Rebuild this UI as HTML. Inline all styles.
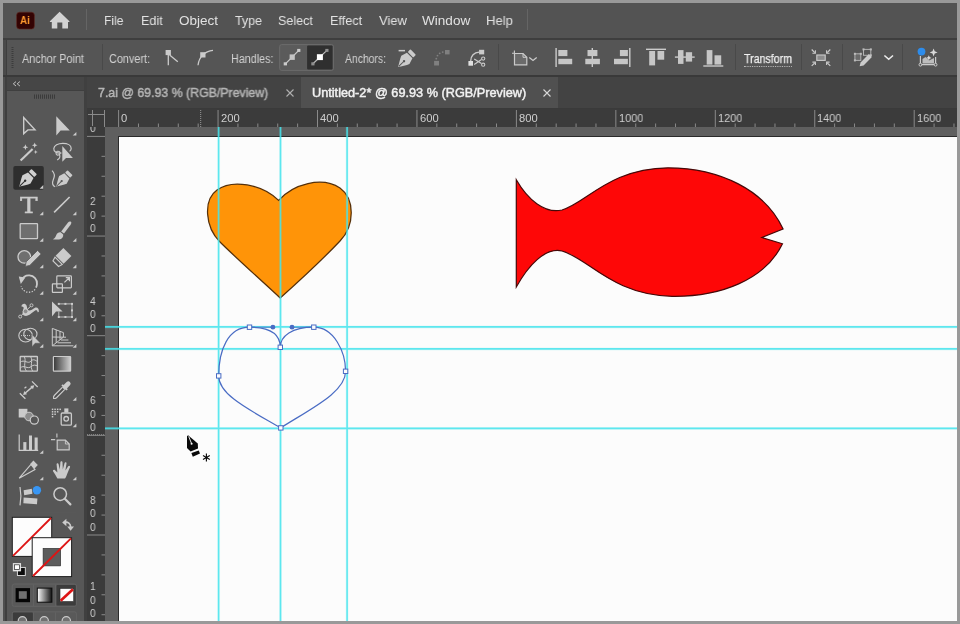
<!DOCTYPE html>
<html lang="en"><head><meta charset="utf-8"><title>Adobe Illustrator</title>
<style>
*{box-sizing:border-box}
html,body{margin:0;padding:0}
body{width:960px;height:624px;background:#999;overflow:hidden;position:relative;font-family:"Liberation Sans",sans-serif}
#app{position:absolute;left:0;top:0;width:957px;height:621px;overflow:hidden}
.b{position:absolute}
.t{position:absolute;white-space:nowrap;transform-origin:0 0;display:block;will-change:transform}
svg{position:absolute;overflow:visible}
</style></head>
<body>
<div id="app">
<div class="b" style="left:3px;top:3px;width:954px;height:618px;background:#535353;"></div>
<div class="b" style="left:3px;top:3px;width:954px;height:35px;background:#535353;"></div>
<div class="b" style="left:3px;top:38px;width:954px;height:2px;background:#3e3e3e;"></div>
<div class="b" style="left:3px;top:40px;width:3px;height:36px;background:#4a4a4a;"></div>
<div class="b" style="left:6px;top:40px;width:951px;height:35px;background:#555555;border-left:1px solid #3e3e3e;"></div>
<div class="b" style="left:3px;top:75px;width:954px;height:2px;background:#393939;"></div>
<div class="b" style="left:3px;top:77px;width:2.4000000000000004px;height:544px;background:#4f4f4f;"></div>
<div class="b" style="left:5.4px;top:77px;width:1.2999999999999998px;height:544px;background:#3f3f3f;"></div>
<div class="b" style="left:6.7px;top:77px;width:77.3px;height:13px;background:#464646;"></div>
<div class="b" style="left:6.7px;top:90px;width:77.3px;height:1px;background:#3f3f3f;"></div>
<div class="b" style="left:6.7px;top:91px;width:77.3px;height:530px;background:#575757;"></div>
<div class="b" style="left:84px;top:77px;width:3px;height:544px;background:#404040;"></div>
<div class="b" style="left:87px;top:77px;width:870px;height:31px;background:#434343;"></div>
<div class="b" style="left:301px;top:77px;width:257px;height:31px;background:#505050;"></div>
<div class="b" style="left:87px;top:108px;width:870px;height:1px;background:#3a3a3a;"></div>
<div class="b" style="left:87px;top:109px;width:870px;height:18px;background:#3b3b3b;"></div>
<div class="b" style="left:87px;top:127px;width:18px;height:494px;background:#3b3b3b;"></div>
<div class="b" style="left:105px;top:127px;width:852px;height:494px;background:#5f5f5f;"></div>
<div class="b" style="left:118px;top:136px;width:839px;height:485px;background:#fcfcfc;border-left:1px solid #2a2a2a;border-top:1px solid #2a2a2a;"></div>
<span class="t" style="left:104.30px;top:13.67px;font-size:13.5px;line-height:13.5px;color:#e2e2e2;transform:scaleX(0.8919);">File</span>
<span class="t" style="left:140.80px;top:13.67px;font-size:13.5px;line-height:13.5px;color:#e2e2e2;transform:scaleX(0.9328);">Edit</span>
<span class="t" style="left:179.30px;top:13.67px;font-size:13.5px;line-height:13.5px;color:#e2e2e2;transform:scaleX(0.9919);">Object</span>
<span class="t" style="left:235.00px;top:13.67px;font-size:13.5px;line-height:13.5px;color:#e2e2e2;transform:scaleX(0.9225);">Type</span>
<span class="t" style="left:278.30px;top:13.67px;font-size:13.5px;line-height:13.5px;color:#e2e2e2;transform:scaleX(0.9302);">Select</span>
<span class="t" style="left:329.50px;top:13.67px;font-size:13.5px;line-height:13.5px;color:#e2e2e2;transform:scaleX(0.9396);">Effect</span>
<span class="t" style="left:378.80px;top:13.67px;font-size:13.5px;line-height:13.5px;color:#e2e2e2;transform:scaleX(0.9615);">View</span>
<span class="t" style="left:421.80px;top:13.67px;font-size:13.5px;line-height:13.5px;color:#e2e2e2;transform:scaleX(1.0039);">Window</span>
<span class="t" style="left:486.30px;top:13.67px;font-size:13.5px;line-height:13.5px;color:#e2e2e2;transform:scaleX(0.9689);">Help</span>
<div class="b" style="left:86px;top:9px;width:1px;height:21px;background:#656565;"></div>
<div class="b" style="left:527px;top:9px;width:1px;height:21px;background:#656565;"></div>
<span class="t" style="left:22.00px;top:53.24px;font-size:12px;line-height:12px;color:#d2d2d2;transform:scaleX(0.9023);">Anchor Point</span>
<span class="t" style="left:109.00px;top:53.24px;font-size:12px;line-height:12px;color:#d2d2d2;transform:scaleX(0.9040);">Convert:</span>
<span class="t" style="left:230.50px;top:53.24px;font-size:12px;line-height:12px;color:#d2d2d2;transform:scaleX(0.8973);">Handles:</span>
<span class="t" style="left:345.00px;top:53.24px;font-size:12px;line-height:12px;color:#d2d2d2;transform:scaleX(0.8658);">Anchors:</span>
<span class="t" style="left:744.00px;top:53.24px;font-size:12px;line-height:12px;color:#f0f0f0;transform:scaleX(0.8851);border-bottom:1px dotted #bdbdbd;padding-bottom:1px;-webkit-text-stroke:0.25px #f0f0f0;">Transform</span>
<div class="b" style="left:102px;top:44px;width:1px;height:26px;background:#494949;"></div>
<div class="b" style="left:498px;top:44px;width:1px;height:26px;background:#494949;"></div>
<div class="b" style="left:735px;top:44px;width:1px;height:26px;background:#494949;"></div>
<div class="b" style="left:800.5px;top:44px;width:1.0px;height:26px;background:#494949;"></div>
<div class="b" style="left:841.8px;top:44px;width:1.0px;height:26px;background:#494949;"></div>
<div class="b" style="left:901.6px;top:44px;width:1.0px;height:26px;background:#494949;"></div>
<span class="t" style="left:98.30px;top:86.90px;font-size:12.4px;line-height:12.4px;color:#b6b6b6;transform:scaleX(0.9959);-webkit-text-stroke:0.45px #b6b6b6;">7.ai @ 69.93 % (RGB/Preview)</span>
<span class="t" style="left:312.30px;top:86.90px;font-size:12.4px;line-height:12.4px;color:#f2f2f2;transform:scaleX(1.0259);-webkit-text-stroke:0.45px #f2f2f2;">Untitled-2* @ 69.93 % (RGB/Preview)</span>
<svg style="left:285.5px;top:89.3px" width="8" height="8" viewBox="0 0 8 8"><path d="M0.5 0.5L7.5 7.5M7.5 0.5L0.5 7.5" stroke="#b0b0b0" stroke-width="1.1" fill="none"/></svg>
<svg style="left:543px;top:89.3px" width="8" height="8" viewBox="0 0 8 8"><path d="M0.5 0.5L7.5 7.5M7.5 0.5L0.5 7.5" stroke="#d8d8d8" stroke-width="1.1" fill="none"/></svg>
<svg style="left:0;top:0" width="957" height="621" viewBox="0 0 957 621"><path d="M92.5 110V126M88 114.5H105M104.5 110V127" stroke="#8a8a8a" stroke-width="1" fill="none"/><path d="M118.60 110V127M138.49 123.5V127M158.38 123.5V127M178.27 123.5V127M198.16 123.5V127M218.05 110V127M237.94 123.5V127M257.83 123.5V127M277.72 123.5V127M297.61 123.5V127M317.50 110V127M337.39 123.5V127M357.28 123.5V127M377.17 123.5V127M397.06 123.5V127M416.95 110V127M436.84 123.5V127M456.73 123.5V127M476.62 123.5V127M496.51 123.5V127M516.40 110V127M536.29 123.5V127M556.18 123.5V127M576.07 123.5V127M595.96 123.5V127M615.85 110V127M635.74 123.5V127M655.63 123.5V127M675.52 123.5V127M695.41 123.5V127M715.30 110V127M735.19 123.5V127M755.08 123.5V127M774.97 123.5V127M794.86 123.5V127M814.75 110V127M834.64 123.5V127M854.53 123.5V127M874.42 123.5V127M894.31 123.5V127M914.20 110V127M934.09 123.5V127M953.98 123.5V127" stroke="#8a8a8a" stroke-width="1" fill="none"/><path d="M200.7 110V127" stroke="#9a9a9a" stroke-width="1" stroke-dasharray="1 1" fill="none"/><path d="M87 434.8H105" stroke="#9a9a9a" stroke-width="1" stroke-dasharray="1 1" fill="none"/><path d="M87 136.40H105M101.5 156.33H105M101.5 176.26H105M101.5 196.19H105M101.5 216.12H105M87 236.05H105M101.5 255.98H105M101.5 275.91H105M101.5 295.84H105M101.5 315.77H105M87 335.70H105M101.5 355.63H105M101.5 375.56H105M101.5 395.49H105M101.5 415.42H105M87 435.35H105M101.5 455.28H105M101.5 475.21H105M101.5 495.14H105M101.5 515.07H105M87 535.00H105M101.5 554.93H105M101.5 574.86H105M101.5 594.79H105M101.5 614.72H105M87 634.65H105" stroke="#8a8a8a" stroke-width="1" fill="none"/></svg>
<span class="t" style="left:121.30px;top:112.92px;font-size:11.2px;line-height:11.2px;color:#cfcfcf;transform:scaleX(0.9750);">0</span>
<span class="t" style="left:220.75px;top:112.92px;font-size:11.2px;line-height:11.2px;color:#cfcfcf;transform:scaleX(0.9750);">200</span>
<span class="t" style="left:320.20px;top:112.92px;font-size:11.2px;line-height:11.2px;color:#cfcfcf;transform:scaleX(0.9750);">400</span>
<span class="t" style="left:419.65px;top:112.92px;font-size:11.2px;line-height:11.2px;color:#cfcfcf;transform:scaleX(0.9750);">600</span>
<span class="t" style="left:519.10px;top:112.92px;font-size:11.2px;line-height:11.2px;color:#cfcfcf;transform:scaleX(0.9750);">800</span>
<span class="t" style="left:618.55px;top:112.92px;font-size:11.2px;line-height:11.2px;color:#cfcfcf;transform:scaleX(0.9750);">1000</span>
<span class="t" style="left:718.00px;top:112.92px;font-size:11.2px;line-height:11.2px;color:#cfcfcf;transform:scaleX(0.9750);">1200</span>
<span class="t" style="left:817.45px;top:112.92px;font-size:11.2px;line-height:11.2px;color:#cfcfcf;transform:scaleX(0.9750);">1400</span>
<span class="t" style="left:916.90px;top:112.92px;font-size:11.2px;line-height:11.2px;color:#cfcfcf;transform:scaleX(0.9750);">1600</span>
<div class="b" style="left:87px;top:127px;width:18px;height:494px;overflow:hidden">
<span class="t" style="left:2.80px;top:-3.71px;font-size:11px;line-height:11px;color:#cfcfcf;transform:scaleX(0.9153);">0</span>
<span class="t" style="left:2.80px;top:69.14px;font-size:11px;line-height:11px;color:#cfcfcf;transform:scaleX(0.9153);">2</span>
<span class="t" style="left:2.80px;top:82.54px;font-size:11px;line-height:11px;color:#cfcfcf;transform:scaleX(0.9153);">0</span>
<span class="t" style="left:2.80px;top:95.94px;font-size:11px;line-height:11px;color:#cfcfcf;transform:scaleX(0.9153);">0</span>
<span class="t" style="left:2.80px;top:168.79px;font-size:11px;line-height:11px;color:#cfcfcf;transform:scaleX(0.9153);">4</span>
<span class="t" style="left:2.80px;top:182.19px;font-size:11px;line-height:11px;color:#cfcfcf;transform:scaleX(0.9153);">0</span>
<span class="t" style="left:2.80px;top:195.59px;font-size:11px;line-height:11px;color:#cfcfcf;transform:scaleX(0.9153);">0</span>
<span class="t" style="left:2.80px;top:268.44px;font-size:11px;line-height:11px;color:#cfcfcf;transform:scaleX(0.9153);">6</span>
<span class="t" style="left:2.80px;top:281.84px;font-size:11px;line-height:11px;color:#cfcfcf;transform:scaleX(0.9153);">0</span>
<span class="t" style="left:2.80px;top:295.24px;font-size:11px;line-height:11px;color:#cfcfcf;transform:scaleX(0.9153);">0</span>
<span class="t" style="left:2.80px;top:368.09px;font-size:11px;line-height:11px;color:#cfcfcf;transform:scaleX(0.9153);">8</span>
<span class="t" style="left:2.80px;top:381.49px;font-size:11px;line-height:11px;color:#cfcfcf;transform:scaleX(0.9153);">0</span>
<span class="t" style="left:2.80px;top:394.89px;font-size:11px;line-height:11px;color:#cfcfcf;transform:scaleX(0.9153);">0</span>
<span class="t" style="left:2.80px;top:454.34px;font-size:11px;line-height:11px;color:#cfcfcf;transform:scaleX(0.9153);">1</span>
<span class="t" style="left:2.80px;top:467.74px;font-size:11px;line-height:11px;color:#cfcfcf;transform:scaleX(0.9153);">0</span>
<span class="t" style="left:2.80px;top:481.14px;font-size:11px;line-height:11px;color:#cfcfcf;transform:scaleX(0.9153);">0</span>
<span class="t" style="left:2.80px;top:494.54px;font-size:11px;line-height:11px;color:#cfcfcf;transform:scaleX(0.9153);">0</span>
</div>
<svg style="left:0;top:0" width="957" height="621" viewBox="0 0 957 621"><path d="M280.2 298 C262 281 236 258 220 242 C205 227 203 200 217 190 C232 179 262 184 278.6 200.4 C293 184 322 176 340 188 C355 199 355 225 340 241 C322 260 297 283 280.2 298Z" fill="#ff9408" stroke="#55300a" stroke-width="1.25"/><path d="M516.3 179.7 C528 200 545 214 562 210 C585 204 610 168 668 167.8 C720 168 765 190 783.1 229 L761.9 237.5 L782.5 243.8 C765 280 720 297 672 296.3 C612 295 588 258 562 251 C545 247 528 266 516.3 287Z" fill="#fe0707" stroke="#450808" stroke-width="1.2"/><path d="M218.6 127V621M280.5 127V621M347.1 127V621M105 326.9H957M105 348.9H957M105 428.4H957" stroke="#45e4ec" stroke-width="3" fill="none" opacity="0.14"/><path d="M218.6 127V621M280.5 127V621M347.1 127V621M105 326.9H957M105 348.9H957M105 428.4H957" stroke="#45e4ec" stroke-width="1.6" fill="none" opacity="0.85"/><path d="M280.6 427.9 C250 410 218.7 395 218.7 375.9 C218.7 350 228 327.2 249.5 327.2 C272.9 327.2 280.3 336 280.3 347.3 C280.3 336 292 327.2 313.8 327.2 C334 327.2 345.6 352 345.6 371.3 C345.6 392 312 408 280.6 427.9Z" fill="none" stroke="#4a6cc4" stroke-width="1.2"/><path d="M249.5 327.2H272.9M292 327.2H313.8" stroke="#4a6cc4" stroke-width="0.9" fill="none"/><rect x="216.5" y="373.7" width="4.4" height="4.4" fill="#fcfcfc" stroke="#4a6cc4" stroke-width="1"/><rect x="247.3" y="325.0" width="4.4" height="4.4" fill="#fcfcfc" stroke="#4a6cc4" stroke-width="1"/><rect x="311.6" y="325.0" width="4.4" height="4.4" fill="#fcfcfc" stroke="#4a6cc4" stroke-width="1"/><rect x="343.40000000000003" y="369.1" width="4.4" height="4.4" fill="#fcfcfc" stroke="#4a6cc4" stroke-width="1"/><rect x="278.1" y="345.1" width="4.4" height="4.4" fill="#fcfcfc" stroke="#4a6cc4" stroke-width="1"/><rect x="278.6" y="425.7" width="4.4" height="4.4" fill="#fcfcfc" stroke="#4a6cc4" stroke-width="1"/><circle cx="272.9" cy="327.2" r="2.4" fill="#4a6cc4"/><circle cx="292" cy="327.2" r="2.4" fill="#4a6cc4"/><path d="M188.1 435.3 L197.8 443.6 L198 448.6 L190.6 451.5 L187 448 L187 436.2Z" fill="#0a0a0a"/><path d="M188.7 436.4L191.4 443.2" stroke="#fcfcfc" stroke-width="0.9"/><circle cx="191.6" cy="443.8" r="1.05" fill="#fcfcfc"/><path d="M191.4 453.1 L198.7 450.6 L200 453.6 L192.8 456.7Z" fill="#0a0a0a"/><path d="M206.4 453.6V461.4M203 455.6L209.8 459.5M209.8 455.6L203 459.5" stroke="#0a0a0a" stroke-width="1.15" fill="none"/></svg>
<svg style="left:0;top:0" width="957" height="621" viewBox="0 0 957 621"><rect x="16.6" y="12.2" width="17.8" height="16.8" rx="3" fill="#330303" stroke="#5f2a22" stroke-width="0.6"/><path d="M59.6 11.7 L69.4 21.2 Q69.8 22 68.9 22.1 H68 V28.6 H62.3 V22.6 H57.3 V28.6 H51.8 V22.1 H50.4 Q49.5 22 49.9 21.2Z" fill="#d2d2d2" /><path d="M12.5 47V69" stroke="#3c3c3c" stroke-width="2" stroke-dasharray="1 1" fill="none"/><rect x="165.60" y="50.00" width="5.30" height="5.10" rx="0" fill="#cbcbcb" /><path d="M168.3 55V65.3M169.6 55L177.8 61.8" fill="none" stroke="#cbcbcb" stroke-width="1.3" /><rect x="200.20" y="52.20" width="5.30" height="5.30" rx="0" fill="#cbcbcb" /><path d="M198 65.3 C198.4 61.5 199.8 58 202.8 54.9 C205.5 52.3 209 50.8 213 50.4" fill="none" stroke="#cbcbcb" stroke-width="1.3" /><rect x="279.70" y="44.60" width="53.70" height="25.80" rx="2" fill="#5b5b5b" stroke="#6c6c6c" stroke-width="1" /><rect x="307.10" y="45.60" width="25.50" height="23.90" rx="1" fill="#2f2f2f" /><path d="M285.4 63.8L298.8 50.4" fill="none" stroke="#cbcbcb" stroke-width="1.2" /><rect x="297.20" y="48.90" width="3.20" height="3.00" rx="0" fill="#cbcbcb" /><rect x="283.70" y="62.30" width="3.30" height="3.10" rx="0" fill="#cbcbcb" /><rect x="289.60" y="54.40" width="5.20" height="5.50" rx="0" fill="#c4c4c4" /><path d="M312.9 63.8L326.9 50.4" fill="none" stroke="#bdbdbd" stroke-width="1.2" /><rect x="325.30" y="48.90" width="3.20" height="3.00" rx="0" fill="#8f8f8f" /><rect x="311.30" y="62.30" width="3.20" height="3.10" rx="0" fill="#8f8f8f" /><rect x="316.90" y="54.20" width="6.00" height="5.90" rx="0" fill="#ffffff" /><rect x="398.60" y="49.90" width="6.40" height="1.50" rx="0" fill="#cbcbcb" /><g transform="translate(398.3,66.9) rotate(45) scale(1.03)"><path d="M0 0.3 C-1.6 -2.6 -4.6 -7 -5.6 -9.7 L-3.8 -15.6 H3.8 L5.6 -9.7 C4.6 -7 1.6 -2.6 0 0.3Z" fill="#cbcbcb"/><path d="M0 -0.6V-7.4" stroke="#545454" stroke-width="1"/><circle cx="0" cy="-7.9" r="1.15" fill="#545454"/><rect x="-3.8" y="-20.4" width="7.6" height="3.7" rx="0.8" fill="#cbcbcb"/></g><rect x="445.00" y="50.00" width="4.60" height="4.40" rx="0" fill="#808080" /><rect x="434.10" y="60.90" width="4.90" height="4.60" rx="0" fill="#808080" /><circle cx="436.3" cy="58.7" r="0.9" fill="#808080" /><circle cx="437.5" cy="55.6" r="0.9" fill="#808080" /><circle cx="439.7" cy="53.3" r="0.9" fill="#808080" /><circle cx="442.7" cy="52.1" r="0.9" fill="#808080" /><path d="M470.7 61 C470.7 56 474 52.2 479.2 52.1" fill="none" stroke="#cbcbcb" stroke-width="1.3" /><rect x="479.10" y="49.80" width="5.10" height="4.60" rx="0" fill="#cbcbcb" /><rect x="468.40" y="61.00" width="4.60" height="4.70" rx="0" fill="#e0e0e0" /><path d="M474.2 59L481.5 63.6M474.2 64.6L481.5 59.6" fill="none" stroke="#cbcbcb" stroke-width="1.2" /><circle cx="483.2" cy="58.6" r="1.6" fill="none" stroke="#cbcbcb" stroke-width="1.1" /><circle cx="483.2" cy="64.7" r="1.6" fill="none" stroke="#cbcbcb" stroke-width="1.1" /><path d="M514.5 53.5H523L526.8 57.3V64.8H514.5Z" fill="#6b6b6b" stroke="#cbcbcb" stroke-width="1.2" /><path d="M523 53.5V57.3H526.8" fill="none" stroke="#cbcbcb" stroke-width="1" /><path d="M512 53.2H514.5M514.4 50.6V53.4" fill="none" stroke="#cbcbcb" stroke-width="1.1" /><path d="M529.3 57.4L533 60.4L536.7 57.4" fill="none" stroke="#cbcbcb" stroke-width="1.3" /><path d="M556.1 48.1V67.1" fill="none" stroke="#cbcbcb" stroke-width="1.4" /><rect x="558.30" y="50.00" width="9.10" height="6.10" rx="0" fill="#c6c6c6" /><rect x="558.30" y="58.80" width="13.90" height="5.40" rx="0" fill="#c6c6c6" /><path d="M592.3 48.1V67.1" fill="none" stroke="#cbcbcb" stroke-width="1.4" /><rect x="587.50" y="50.00" width="9.90" height="6.10" rx="0" fill="#c6c6c6" /><rect x="585.30" y="58.80" width="14.60" height="5.40" rx="0" fill="#c6c6c6" /><path d="M629.8 48.1V67.1" fill="none" stroke="#cbcbcb" stroke-width="1.4" /><rect x="619.90" y="50.00" width="8.00" height="6.10" rx="0" fill="#c6c6c6" /><rect x="614.00" y="58.80" width="13.90" height="5.40" rx="0" fill="#c6c6c6" /><path d="M646 49.3H666" fill="none" stroke="#cbcbcb" stroke-width="1.4" /><rect x="649.20" y="51.00" width="5.90" height="14.40" rx="0" fill="#c6c6c6" /><rect x="657.50" y="51.00" width="6.70" height="8.70" rx="0" fill="#c6c6c6" /><path d="M674.9 57.1H694.7" fill="none" stroke="#cbcbcb" stroke-width="1.4" /><rect x="678.00" y="50.10" width="5.50" height="13.80" rx="0" fill="#c6c6c6" /><rect x="685.80" y="52.20" width="6.30" height="9.40" rx="0" fill="#c6c6c6" /><path d="M703.3 66H723.3" fill="none" stroke="#cbcbcb" stroke-width="1.4" /><rect x="706.70" y="50.10" width="5.70" height="14.50" rx="0" fill="#c6c6c6" /><rect x="714.50" y="55.30" width="6.70" height="9.30" rx="0" fill="#c6c6c6" /><rect x="816.80" y="55.00" width="8.40" height="5.40" rx="0" fill="#8c8c8c" stroke="#cbcbcb" stroke-width="1.1" /><path d="M811.7 49.5L814.8 52.6M830.3 49.5L827.2 52.6M811.7 65.9L814.8 62.8M830.3 65.9L827.2 62.8" fill="none" stroke="#cbcbcb" stroke-width="1.2" /><path d="M812.4 53.3H815.4V50.3M829.6 53.3H826.6V50.3M812.4 62.1H815.4V65.1M829.6 62.1H826.6V65.1" fill="none" stroke="#cbcbcb" stroke-width="1.1" /><rect x="854.90" y="53.80" width="5.90" height="6.60" rx="0" fill="#6a6a6a" stroke="#b2b2b2" stroke-width="1" /><rect x="863.50" y="49.40" width="7.30" height="5.90" rx="0" fill="none" stroke="#b2b2b2" stroke-width="1" /><rect x="853.90" y="52.80" width="2.00" height="2.00" rx="0" fill="#bcbcbc" /><rect x="859.80" y="52.80" width="2.00" height="2.00" rx="0" fill="#bcbcbc" /><rect x="853.90" y="59.40" width="2.00" height="2.00" rx="0" fill="#bcbcbc" /><rect x="862.50" y="48.40" width="2.00" height="2.00" rx="0" fill="#bcbcbc" /><rect x="869.80" y="48.40" width="2.00" height="2.00" rx="0" fill="#bcbcbc" /><rect x="869.80" y="54.30" width="2.00" height="2.00" rx="0" fill="#bcbcbc" /><path d="M859.6 66.2L860.6 62.4L868.9 54.1L871.9 57.1L863.6 65.4Z" fill="#cbcbcb" /><path d="M884.4 55.5L888.7 59.3L893 55.5" fill="none" stroke="#ececec" stroke-width="1.6" /><path d="M920.4 56V64.7H935.6V57" fill="none" stroke="#cbcbcb" stroke-width="1.2" /><path d="M922.5 63.5V59L925.5 57L929 60.5L934 58V63.5Z" fill="#bdbdbd" /><circle cx="920.4" cy="64.7" r="1.4" fill="#545454" stroke="#cbcbcb" stroke-width="1" /><circle cx="935.6" cy="64.7" r="1.4" fill="#545454" stroke="#cbcbcb" stroke-width="1" /><path d="M933.6 48.4L934.7 51.3L937.6 52.4L934.7 53.5L933.6 56.4L932.5 53.5L929.6 52.4L932.5 51.3Z" fill="#dadada" /><path d="M928.8 55.2L929.6 57.1L931.5 57.9L929.6 58.7L928.8 60.6L928 58.7L926.1 57.9L928 57.1Z" fill="#dadada" /><circle cx="921.5" cy="51.6" r="3.9" fill="#2d8ceb" /><path d="M16 81.6L13.3 83.8L16 86M19.9 81.6L17.2 83.8L19.9 86" fill="none" stroke="#c2c2c2" stroke-width="1" /><path d="M34 96.6H55.3" stroke="#3b3b3b" stroke-width="4.2" stroke-dasharray="1 1" fill="none"/><path d="M23.7 117.6V133.6L27.9 129.9H35Z" fill="none" stroke="#cbcbcb" stroke-width="1.4" stroke-linejoin="miter"/><path d="M56.3 116.3V135.4L60.6 130.6H69.8Z" fill="#cbcbcb" /><path d="M20.6 160.5L32.6 148.9" fill="none" stroke="#cbcbcb" stroke-width="2.1" /><path d="M25.4 144.29999999999998L26.212 146.38799999999998L28.299999999999997 147.2L26.212 148.012L25.4 150.1L24.587999999999997 148.012L22.5 147.2L24.587999999999997 146.38799999999998Z" fill="#cbcbcb" /><path d="M34.7 142.5L35.484 144.51600000000002L37.5 145.3L35.484 146.084L34.7 148.10000000000002L33.916000000000004 146.084L31.900000000000002 145.3L33.916000000000004 144.51600000000002Z" fill="#cbcbcb" /><path d="M35.7 149.9L36.288000000000004 151.412L37.800000000000004 152L36.288000000000004 152.588L35.7 154.1L35.112 152.588L33.6 152L35.112 151.412Z" fill="#cbcbcb" /><path d="M61.5 153 C56 153.5 53.6 151 53.8 148.6 C54 145.5 58 143.4 62.8 143.4 C67.6 143.4 71.2 145.4 71.2 148.4 C71.2 149.6 70.6 150.6 69.6 151.4" fill="none" stroke="#cbcbcb" stroke-width="1.2" /><path d="M57.6 151.2 C59.5 151 60.5 152.4 60 153.8 C59.5 155.2 57.4 155.6 56.4 154.4 C55.6 153.2 56.4 151.6 57.6 151.2M59.6 154.6 C60.3 156.6 59.6 158.6 57.2 160" fill="none" stroke="#cbcbcb" stroke-width="1.1" /><path d="M62.3 146V161.8L66 158H72.9Z" fill="#cbcbcb" /><rect x="13.30" y="166.00" width="30.50" height="23.80" rx="2" fill="#2e2e2e" /><g transform="translate(19.5,186.4) rotate(45) scale(1.02)"><path d="M0 0.3 C-1.6 -2.6 -4.6 -7 -5.6 -9.7 L-3.8 -15.6 H3.8 L5.6 -9.7 C4.6 -7 1.6 -2.6 0 0.3Z" fill="#d0d0d0"/><path d="M0 -0.6V-7.4" stroke="#2e2e2e" stroke-width="1"/><circle cx="0" cy="-7.9" r="1.15" fill="#2e2e2e"/><rect x="-3.8" y="-20.4" width="7.6" height="3.7" rx="0.8" fill="#d0d0d0"/></g><g transform="translate(56.4,186.4) rotate(45) scale(0.95)"><path d="M0 0.3 C-1.6 -2.6 -4.6 -7 -5.6 -9.7 L-3.8 -15.6 H3.8 L5.6 -9.7 C4.6 -7 1.6 -2.6 0 0.3Z" fill="#cbcbcb"/><path d="M0 -0.6V-7.4" stroke="#575757" stroke-width="1"/><circle cx="0" cy="-7.9" r="1.15" fill="#575757"/><rect x="-3.8" y="-20.4" width="7.6" height="3.7" rx="0.8" fill="#cbcbcb"/></g><path d="M52 170.6 C55.4 173.5 54.6 177 53.2 180 C52 182.8 52.3 185.6 55.2 186.8" fill="none" stroke="#cbcbcb" stroke-width="1.2" /><path d="M54.1 212.4L69.6 197" fill="none" stroke="#cbcbcb" stroke-width="1.6" /><rect x="20.20" y="223.60" width="17.30" height="15.00" rx="0.6" fill="#6f6f6f" stroke="#cbcbcb" stroke-width="1.3" /><path d="M70.9 221.8 C71.6 222.4 71.4 223.6 70.6 224.8 L64 233.6 L61.2 231.4 L67.8 222.8 C68.8 221.6 70 221.2 70.9 221.8Z" fill="#cbcbcb" /><path d="M60.6 232.2L63.2 234.4 C63.6 237 62 239 59 239.4 C56.5 239.7 54.3 239.5 52.8 239.3 C55 238.4 55.6 236.6 56.3 234.9 C57.1 233 58.7 232 60.6 232.2Z" fill="#cbcbcb" /><circle cx="24.3" cy="256.9" r="6.3" fill="#6f6f6f" stroke="#cbcbcb" stroke-width="1.3" /><path d="M25.2 266.4L26.2 261.8L37.6 250.4L41.2 254L29.8 265.4Z" fill="#cbcbcb" stroke="#575757" stroke-width="0.8" /><path d="M63.4 248L71.4 256L63.6 263.8L55.6 255.8Z" fill="#cbcbcb" /><path d="M55 257.2L62.2 264.4L58.6 266.4L53 260.8Z" fill="none" stroke="#cbcbcb" stroke-width="1.2" /><path d="M21.6 280.6 C23 276.8 26 275.2 29.4 275.4 C34 275.7 37.3 279.4 37 284 C36.9 285.4 36.5 286.6 36 287.6" fill="none" stroke="#cbcbcb" stroke-width="1.8" /><path d="M18.8 276.6L25.4 277.6L20.8 284Z" fill="#cbcbcb" /><path d="M35 289.4 C32.6 292.6 27.4 293.2 24 290.6 C22.6 289.5 21.6 288 21.2 286.4" fill="none" stroke="#cbcbcb" stroke-width="1.3" stroke-dasharray="1.3 1.5"/><rect x="56.80" y="275.90" width="14.60" height="12.00" rx="0.8" fill="none" stroke="#cbcbcb" stroke-width="1.2" /><rect x="52.40" y="283.80" width="10.00" height="8.60" rx="0.5" fill="none" stroke="#cbcbcb" stroke-width="1.2" /><path d="M64.4 282.4L69 278M65.8 277.6H69.4V281.2" fill="none" stroke="#cbcbcb" stroke-width="1.2" /><path d="M21.4 306.6 C21.6 304.4 23.6 303.2 25.4 304.2 C27.6 305.6 26.6 308.4 28 310 C29.6 311.8 32.4 309.2 34.6 308 C37 306.8 39.4 308.4 38.8 312 L37.6 312.2 C37.4 310.4 36.4 309.8 34.8 310.8 C32 312.6 28.6 316.6 24.6 315.8 C21.4 315 22.8 311 23.6 308.6 C24 307.2 22.8 306.4 21.4 306.6Z" fill="#cbcbcb" /><path d="M20.4 316.4L31.4 305.4" fill="none" stroke="#cbcbcb" stroke-width="1" /><circle cx="20.2" cy="316.6" r="1.5" fill="#575757" stroke="#cbcbcb" stroke-width="0.9" /><circle cx="31.5" cy="305.3" r="1.5" fill="#575757" stroke="#cbcbcb" stroke-width="0.9" /><circle cx="25.6" cy="311.3" r="2.4" fill="#8a8a8a" stroke="#cbcbcb" stroke-width="0.9" /><path d="M52 301.4V316.4L56 311.4H62.6Z" fill="#cbcbcb" /><path d="M58.8 303.9H72V317H58.8V311.6" fill="none" stroke="#cbcbcb" stroke-width="0.9" /><rect x="57.80" y="302.90" width="2.00" height="2.00" rx="0" fill="#cbcbcb" /><rect x="64.40" y="302.90" width="2.00" height="2.00" rx="0" fill="#cbcbcb" /><rect x="71.00" y="302.90" width="2.00" height="2.00" rx="0" fill="#cbcbcb" /><rect x="71.00" y="309.40" width="2.00" height="2.00" rx="0" fill="#cbcbcb" /><rect x="71.00" y="316.00" width="2.00" height="2.00" rx="0" fill="#cbcbcb" /><rect x="64.40" y="316.00" width="2.00" height="2.00" rx="0" fill="#cbcbcb" /><rect x="57.80" y="316.00" width="2.00" height="2.00" rx="0" fill="#cbcbcb" /><ellipse cx="25.6" cy="335.6" rx="6.8" ry="6.4" fill="none" stroke="#cbcbcb" stroke-width="1.1"/><ellipse cx="30.4" cy="334" rx="6.6" ry="5.8" fill="none" stroke="#cbcbcb" stroke-width="1.1"/><path d="M21 335.6H31.5" fill="none" stroke="#cbcbcb" stroke-width="1" stroke-dasharray="1 1"/><path d="M32 334.4V346.8L35.2 343.2H40.6Z" fill="#cbcbcb" stroke="#575757" stroke-width="0.5" /><path d="M52.3 328.4V345.8H73.4M52.3 328.4L63.4 332.6V337.2M52.3 337L63.4 337.2M52.3 345.8L63.4 337.2M56.2 329.9V342.8M60 331.3V339.8M63.4 337.2H66M61 340H68.4M57.6 342.8H71" fill="none" stroke="#cbcbcb" stroke-width="1" /><rect x="20.20" y="356.50" width="17.20" height="14.60" rx="0.6" fill="#5e5e5e" stroke="#cbcbcb" stroke-width="1.3" /><path d="M20.2 362.4 C24 358.6 28 364.8 31 361 C33 358.8 35.4 360 37.4 361.6M20.2 368.2 C23.6 364 27.6 370 31.4 366.4 C33.4 364.6 35.6 365 37.4 366M24 356.5 C27 360 22.4 366 26.4 371.1M30.6 356.5 C33.4 361 29.4 366 32.6 371.1" fill="none" stroke="#cbcbcb" stroke-width="1" /><defs><linearGradient id="gA" x1="0" x2="1" y1="0" y2="0"><stop offset="0" stop-color="#383838"/><stop offset="1" stop-color="#cfcfcf"/></linearGradient><linearGradient id="gB" x1="0" x2="1" y1="0" y2="0"><stop offset="0" stop-color="#ffffff"/><stop offset="1" stop-color="#101010"/></linearGradient></defs><rect x="53.40" y="356.50" width="17.20" height="14.60" rx="0.6" fill="url(#gA)" stroke="#cbcbcb" stroke-width="1.2" /><path d="M19.8 393.2L25.4 398.8M32 381.4L37.7 387" fill="none" stroke="#cbcbcb" stroke-width="1.3" /><path d="M25 393.2L32.4 386.9" fill="none" stroke="#cbcbcb" stroke-width="1.5" /><path d="M23.1 394.9L27 394.2L24.3 391Z" fill="#cbcbcb" /><path d="M34.3 385.3L33 389.2L30.3 386Z" fill="#cbcbcb" /><path d="M24.5 388.3L26.4 386.7" fill="none" stroke="#cbcbcb" stroke-width="1.2" /><path d="M62.6 387.2L54.3 395.5 C53.6 396.3 53.4 397.6 53.6 398.4 C54.4 398.6 55.7 398.4 56.5 397.7L64.8 389.4" fill="#4c4c4c" stroke="#cbcbcb" stroke-width="1.2" /><path d="M62.1 384.9L67.1 389.9" fill="none" stroke="#cbcbcb" stroke-width="2" /><path d="M65 387L68.3 383.7" fill="none" stroke="#cbcbcb" stroke-width="4.6" stroke-linecap="round"/><rect x="18.70" y="408.80" width="8.70" height="8.70" rx="0" fill="#cbcbcb" /><circle cx="29" cy="416.5" r="4.3" fill="#8c8c8c" stroke="#cbcbcb" stroke-width="1" /><circle cx="34.3" cy="420.1" r="4.1" fill="#555" stroke="#cbcbcb" stroke-width="1.2" /><rect x="61.20" y="413.00" width="10.20" height="12.10" rx="1.2" fill="none" stroke="#cbcbcb" stroke-width="1.3" /><rect x="64.30" y="408.40" width="4.10" height="4.20" rx="0" fill="#cbcbcb" /><circle cx="66.2" cy="418.8" r="2.3" fill="none" stroke="#cbcbcb" stroke-width="1.3" /><rect x="51.80" y="408.60" width="1.50" height="1.50" rx="0" fill="#cbcbcb" /><rect x="54.35" y="408.60" width="1.50" height="1.50" rx="0" fill="#cbcbcb" /><rect x="56.90" y="408.60" width="1.50" height="1.50" rx="0" fill="#cbcbcb" /><rect x="59.45" y="408.60" width="1.50" height="1.50" rx="0" fill="#cbcbcb" /><rect x="51.80" y="411.05" width="1.50" height="1.50" rx="0" fill="#cbcbcb" /><rect x="54.35" y="411.05" width="1.50" height="1.50" rx="0" fill="#cbcbcb" /><rect x="56.90" y="411.05" width="1.50" height="1.50" rx="0" fill="#cbcbcb" /><rect x="51.80" y="413.50" width="1.50" height="1.50" rx="0" fill="#cbcbcb" /><rect x="54.35" y="413.50" width="1.50" height="1.50" rx="0" fill="#cbcbcb" /><rect x="51.80" y="415.95" width="1.50" height="1.50" rx="0" fill="#cbcbcb" /><path d="M19.2 434.4V450.3H38.2" fill="none" stroke="#cbcbcb" stroke-width="1.2" /><rect x="23.30" y="442.10" width="3.10" height="8.20" rx="0" fill="#cbcbcb" /><rect x="29.00" y="435.50" width="3.00" height="14.80" rx="0" fill="#cbcbcb" /><rect x="34.60" y="437.50" width="3.10" height="12.80" rx="0" fill="#cbcbcb" /><path d="M56.9 433.4V437.6M51 439.6H55.2" fill="none" stroke="#cbcbcb" stroke-width="1.1" /><path d="M57.2 440.2H65.4L69.2 444V449.8H57.2Z" fill="#6f6f6f" stroke="#cbcbcb" stroke-width="1.2" /><path d="M65.4 440.2V444H69.2" fill="none" stroke="#cbcbcb" stroke-width="0.9" /><path d="M19.2 478.2L31 464.4L35 469.6Z" fill="none" stroke="#cbcbcb" stroke-width="1.1" /><path d="M30.2 463.9L33.4 460.6L37.8 465L34.6 468.4Z" fill="#cbcbcb" /><path d="M57.4 478.4 C56 476 54.6 473.6 53.2 471.6 C52.4 470.4 53.6 469.2 54.8 470 L57.4 472.4 L56.6 464.4 C56.5 463 58.3 462.8 58.6 464.2 L59.8 469.6 L60.4 462.2 C60.5 460.8 62.4 460.8 62.5 462.2 L62.8 469.4 L64.6 463 C65 461.6 66.8 462.1 66.5 463.5 L65.4 470.4 L68.2 466.2 C69 465 70.6 466 70 467.2 C68.6 470.2 67.4 473.2 66.6 475.4 C66.2 476.6 65.6 477.6 65 478.6Z" fill="#cbcbcb" /><path d="M20 487 C21.2 493 21.2 499.4 20 505.4" fill="none" stroke="#cbcbcb" stroke-width="1.2" /><path d="M23.6 490.2L31.8 488.8L32.4 493.8L24.2 495.2Z" fill="#cbcbcb" /><path d="M23.6 497.6L37.4 498.6L37 504.2L23.4 503.2Z" fill="#cbcbcb" /><circle cx="36.9" cy="490.2" r="4.2" fill="#3896f4" /><circle cx="60.2" cy="494.1" r="6.3" fill="none" stroke="#cbcbcb" stroke-width="1.5" /><path d="M64.8 498.8L70.4 504.4" fill="none" stroke="#cbcbcb" stroke-width="2.2" stroke-linecap="round"/><path d="M76.4 135.6H72.7L76.4 131.9Z" fill="#cbcbcb" /><path d="M43.3 188.64H39.599999999999994L43.3 184.94Z" fill="#cbcbcb" /><path d="M43.3 215.16H39.599999999999994L43.3 211.46Z" fill="#cbcbcb" /><path d="M76.4 215.16H72.7L76.4 211.46Z" fill="#cbcbcb" /><path d="M43.3 241.68H39.599999999999994L43.3 237.98000000000002Z" fill="#cbcbcb" /><path d="M76.4 241.68H72.7L76.4 237.98000000000002Z" fill="#cbcbcb" /><path d="M43.3 268.2H39.599999999999994L43.3 264.5Z" fill="#cbcbcb" /><path d="M76.4 268.2H72.7L76.4 264.5Z" fill="#cbcbcb" /><path d="M43.3 294.72H39.599999999999994L43.3 291.02000000000004Z" fill="#cbcbcb" /><path d="M76.4 294.72H72.7L76.4 291.02000000000004Z" fill="#cbcbcb" /><path d="M43.3 321.24H39.599999999999994L43.3 317.54Z" fill="#cbcbcb" /><path d="M76.4 321.24H72.7L76.4 317.54Z" fill="#cbcbcb" /><path d="M43.3 347.76H39.599999999999994L43.3 344.06Z" fill="#cbcbcb" /><path d="M76.4 347.76H72.7L76.4 344.06Z" fill="#cbcbcb" /><path d="M76.4 400.8H72.7L76.4 397.1Z" fill="#cbcbcb" /><path d="M76.4 427.32H72.7L76.4 423.62Z" fill="#cbcbcb" /><path d="M43.3 453.84H39.599999999999994L43.3 450.14Z" fill="#cbcbcb" /><path d="M43.3 480.36H39.599999999999994L43.3 476.66Z" fill="#cbcbcb" /><path d="M76.4 480.36H72.7L76.4 476.66Z" fill="#cbcbcb" /><path d="M12 512.5H76" fill="none" stroke="#585858" stroke-width="1" /><rect x="12.30" y="517.30" width="39.40" height="39.10" rx="0" fill="#fdfdfd" stroke="#1e1e1e" stroke-width="1" /><path d="M13 555.8L51 518" fill="none" stroke="#dd1414" stroke-width="1.8" /><rect x="32.20" y="537.70" width="39.40" height="38.90" rx="0" fill="#fdfdfd" stroke="#1e1e1e" stroke-width="1" /><rect x="43.10" y="548.30" width="17.60" height="17.60" rx="0" fill="#5c5c5c" stroke="#2a2a2a" stroke-width="0.6" /><path d="M33 576L71 538.4" fill="none" stroke="#dd1414" stroke-width="1.9" /><path d="M64.4 522.4 C68 521.6 70.6 523.6 70.6 527" fill="none" stroke="#cbcbcb" stroke-width="1.7" /><path d="M62.2 522.6L66.4 518.8V526.2Z" fill="#cbcbcb" /><path d="M67.2 526.6H74L70.6 530.8Z" fill="#cbcbcb" /><rect x="17.40" y="567.40" width="7.90" height="8.10" rx="0" fill="#0c0c0c" stroke="#e6e6e6" stroke-width="0.9" /><rect x="13.30" y="563.60" width="7.30" height="7.30" rx="0" fill="#f6f6f6" stroke="#e6e6e6" stroke-width="0.9" /><rect x="14.60" y="564.80" width="4.80" height="4.80" rx="0" fill="#ffffff" stroke="#222" stroke-width="0.7" /><rect x="12.20" y="584.00" width="64.20" height="22.30" rx="2" fill="#595959" stroke="#646464" stroke-width="1" /><path d="M33.4 584.5V606M55.6 584.5V606" fill="none" stroke="#646464" stroke-width="1" /><rect x="56.50" y="584.90" width="19.30" height="20.50" rx="1" fill="#3c3c3c" /><rect x="15.60" y="588.10" width="14.40" height="14.10" rx="0" fill="#050505" /><rect x="18.80" y="591.20" width="8.00" height="7.60" rx="0" fill="#707070" /><rect x="37.30" y="588.10" width="14.60" height="14.10" rx="0" fill="url(#gB)" stroke="#0a0a0a" stroke-width="1" /><rect x="60.00" y="588.50" width="13.70" height="13.00" rx="0" fill="#fdfdfd" stroke="#2a2a2a" stroke-width="0.6" /><path d="M60.6 600.8L73 589.2" fill="none" stroke="#dd1414" stroke-width="2.6" /><rect x="12.20" y="611.80" width="64.20" height="18.20" rx="2" fill="#595959" stroke="#646464" stroke-width="1" /><rect x="12.90" y="612.40" width="20.10" height="17.60" rx="1" fill="#3c3c3c" /><path d="M33.4 612.3V621M55.6 612.3V621" fill="none" stroke="#646464" stroke-width="1" /><circle cx="22.4" cy="620.9" r="4.2" fill="#707070" stroke="#cbcbcb" stroke-width="1.2" /><circle cx="44.2" cy="620.9" r="4.2" fill="#707070" stroke="#cbcbcb" stroke-width="1.2" /><circle cx="66.3" cy="620.9" r="4.2" fill="#707070" stroke="#cbcbcb" stroke-width="1.2" /></svg>
<span class="t" style="left:20.30px;top:14.92px;font-size:11.2px;line-height:11.2px;color:#ff9a2e;font-weight:bold;transform:scaleX(0.8839);">Ai</span>
<span class="t" style="left:20.20px;top:194.58px;font-size:21.4px;line-height:21.4px;color:#cbcbcb;transform:scaleX(1.2331);font-family:'DejaVu Serif','Liberation Serif',serif;-webkit-text-stroke:0.35px #cbcbcb;">T</span>
</div>
</body></html>
